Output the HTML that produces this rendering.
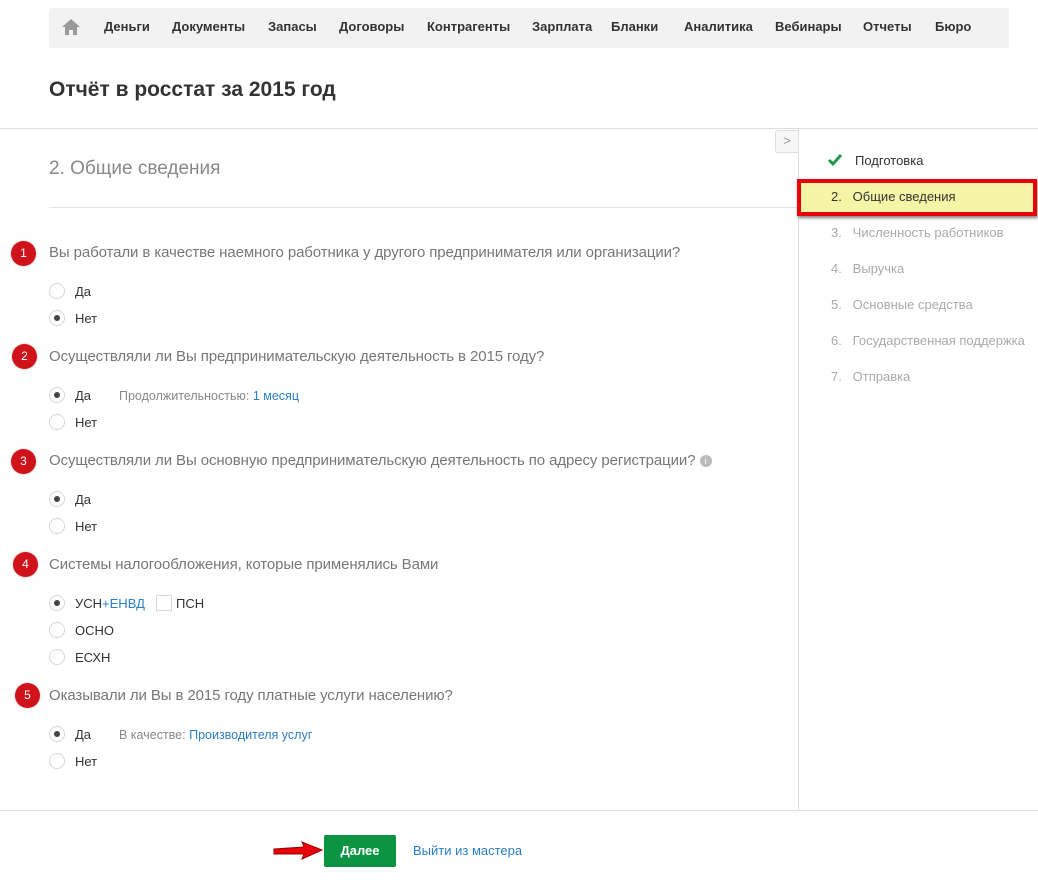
<!DOCTYPE html>
<html><head><meta charset="utf-8"><style>
*{margin:0;padding:0;box-sizing:border-box}
body{width:1038px;height:883px;background:#fff;font-family:"Liberation Sans",Arial,sans-serif;position:relative;overflow:hidden;color:#333}
.a{position:absolute;white-space:nowrap}
.nav{left:49px;top:8px;width:960px;height:40px;background:#f2f2f2;border-radius:3px}
.ni{top:19px;font-size:13px;font-weight:bold;color:#333}
.q{font-size:15px;color:#777;letter-spacing:-0.1px}
.b{width:25px;height:25px;border-radius:50%;background:#d0121b;color:#fff;font-size:12px;text-align:center;line-height:25px;box-shadow:0 0 2px rgba(0,0,0,.3)}
.r{width:16px;height:16px;border-radius:50%;border:1px solid #d6d6d6;background:#fff}
.r.on::after{content:"";position:absolute;left:4px;top:4px;width:6px;height:6px;border-radius:50%;background:#444}
.o{font-size:13px;color:#333}
.s{font-size:12.5px;color:#888}
.lk{color:#2a7ec4}
.st{font-size:13px;color:#aaa}
</style></head><body>
<div class="a nav"></div>
<svg class="a" style="left:61px;top:18px" width="20" height="18" viewBox="0 0 20 18"><path d="M10 1 L1 9 H4 V17 H8 V12 H12 V17 H16 V9 H19 Z" fill="#999"/></svg>
<div class="a ni" style="left:104px">Деньги</div>
<div class="a ni" style="left:172px">Документы</div>
<div class="a ni" style="left:268px">Запасы</div>
<div class="a ni" style="left:339px">Договоры</div>
<div class="a ni" style="left:427px">Контрагенты</div>
<div class="a ni" style="left:532px">Зарплата</div>
<div class="a ni" style="left:611px">Бланки</div>
<div class="a ni" style="left:684px">Аналитика</div>
<div class="a ni" style="left:775px">Вебинары</div>
<div class="a ni" style="left:863px">Отчеты</div>
<div class="a ni" style="left:935px">Бюро</div>
<div class="a" style="left:49px;top:78px;font-size:21px;font-weight:bold;color:#333">Отчёт в росстат за 2015 год</div>
<div class="a" style="left:0;top:128px;width:1038px;height:1px;background:#ddd"></div>
<div class="a" style="left:798px;top:128px;width:1px;height:682px;background:#ddd"></div>
<div class="a" style="left:0;top:810px;width:1038px;height:1px;background:#ddd"></div>
<div class="a" style="left:775px;top:130px;width:23px;height:23px;border:1px solid #ddd;border-right:none;border-radius:3px 0 0 3px;background:#f7f7f7;color:#999;font-size:13px;text-align:center;line-height:20px">&gt;</div>
<div class="a" style="left:49px;top:158px;font-size:19px;color:#888">2. Общие сведения</div>
<div class="a" style="left:49px;top:207px;width:749px;height:1px;background:#e5e5e5"></div>

<div class="a b" style="left:11px;top:241px">1</div>
<div class="a q" style="left:49px;top:244px">Вы работали в качестве наемного работника у другого предпринимателя или организации?</div>
<div class="a r" style="left:49px;top:283px"></div><div class="a o" style="left:75px;top:284px">Да</div>
<div class="a r on" style="left:49px;top:310px"></div><div class="a o" style="left:75px;top:311px">Нет</div>

<div class="a b" style="left:12px;top:344px">2</div>
<div class="a q" style="left:49px;top:348px">Осуществляли ли Вы предпринимательскую деятельность в 2015 году?</div>
<div class="a r on" style="left:49px;top:387px"></div><div class="a o" style="left:75px;top:388px">Да</div>
<div class="a s" style="left:119px;top:389px">Продолжительностью: <span class="lk">1 месяц</span></div>
<div class="a r" style="left:49px;top:414px"></div><div class="a o" style="left:75px;top:415px">Нет</div>

<div class="a b" style="left:11px;top:449px">3</div>
<div class="a q" style="left:49px;top:452px">Осуществляли ли Вы основную предпринимательскую деятельность по адресу регистрации? <span style="display:inline-block;width:12px;height:12px;border-radius:50%;background:#bbb;color:#fff;font-size:9px;text-align:center;line-height:12px;vertical-align:1px">i</span></div>
<div class="a r on" style="left:49px;top:491px"></div><div class="a o" style="left:75px;top:492px">Да</div>
<div class="a r" style="left:49px;top:518px"></div><div class="a o" style="left:75px;top:519px">Нет</div>

<div class="a b" style="left:13px;top:552px">4</div>
<div class="a q" style="left:49px;top:556px">Системы налогообложения, которые применялись Вами</div>
<div class="a r on" style="left:49px;top:595px"></div><div class="a o" style="left:75px;top:596px">УСН<span class="lk">+ЕНВД</span></div>
<div class="a" style="left:156px;top:595px;width:16px;height:16px;border:1px solid #d6d6d6"></div><div class="a o" style="left:176px;top:596px">ПСН</div>
<div class="a r" style="left:49px;top:622px"></div><div class="a o" style="left:75px;top:623px">ОСНО</div>
<div class="a r" style="left:49px;top:649px"></div><div class="a o" style="left:75px;top:650px">ЕСХН</div>

<div class="a b" style="left:15px;top:683px">5</div>
<div class="a q" style="left:49px;top:687px">Оказывали ли Вы в 2015 году платные услуги населению?</div>
<div class="a r on" style="left:49px;top:726px"></div><div class="a o" style="left:75px;top:727px">Да</div>
<div class="a s" style="left:119px;top:728px">В качестве: <span class="lk">Производителя услуг</span></div>
<div class="a r" style="left:49px;top:753px"></div><div class="a o" style="left:75px;top:754px">Нет</div>

<svg class="a" style="left:827px;top:153px" width="16" height="14"><path d="M2 7 L6 11 L14 2" stroke="#1f9a4a" stroke-width="3" fill="none"/></svg>
<div class="a" style="left:855px;top:153px;font-size:13px;color:#333">Подготовка</div>
<div class="a" style="left:797px;top:179px;width:240px;height:37px;background:#f5f5a8;border:4px solid #e8000a;box-shadow:1px 2px 3px rgba(0,0,0,.5)"></div>
<div class="a" style="left:831px;top:189px;font-size:13px;color:#333">2.&nbsp;&nbsp;&nbsp;Общие сведения</div>
<div class="a st" style="left:831px;top:225px">3.&nbsp;&nbsp;&nbsp;Численность работников</div>
<div class="a st" style="left:831px;top:261px">4.&nbsp;&nbsp;&nbsp;Выручка</div>
<div class="a st" style="left:831px;top:297px">5.&nbsp;&nbsp;&nbsp;Основные средства</div>
<div class="a st" style="left:831px;top:333px">6.&nbsp;&nbsp;&nbsp;Государственная поддержка</div>
<div class="a st" style="left:831px;top:369px">7.&nbsp;&nbsp;&nbsp;Отправка</div>

<svg class="a" style="left:270px;top:840px" width="56" height="22"><path d="M4 9 L34 7 L32 2 L52 10 L32 19 L34 14 L4 14 Z" fill="#e8000a" stroke="#900" stroke-width="1"/></svg>
<div class="a" style="left:324px;top:835px;width:72px;height:32px;background:#0c9443;border-radius:2px;color:#fff;font-size:13px;font-weight:bold;text-align:center;line-height:32px">Далее</div>
<div class="a" style="left:413px;top:843px;font-size:13px;color:#2a7ec4">Выйти из мастера</div>
</body></html>
